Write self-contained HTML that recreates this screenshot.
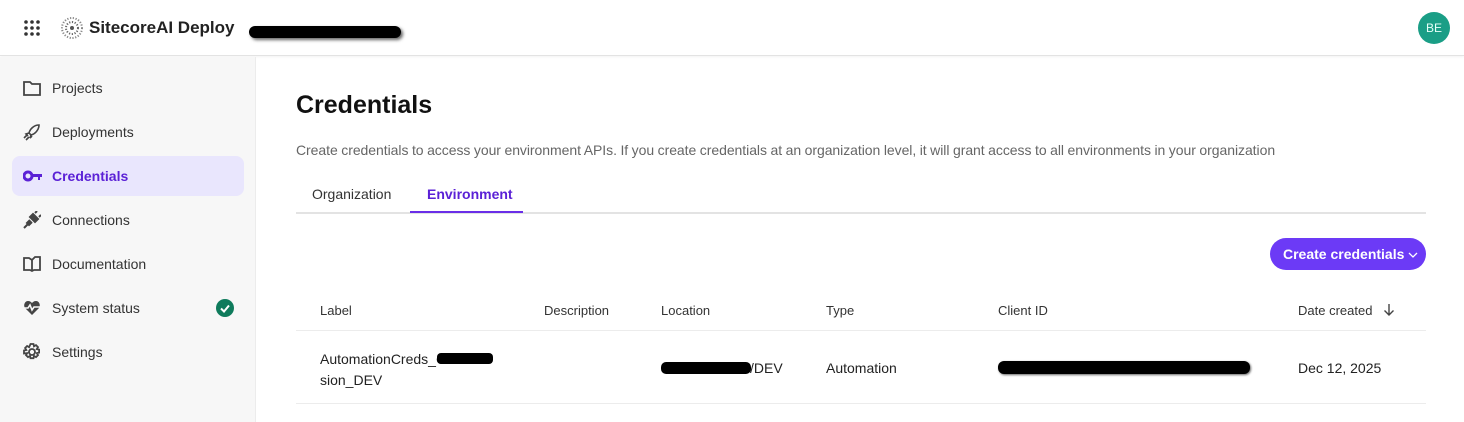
<!DOCTYPE html><html><head><style>
*{margin:0;padding:0;box-sizing:border-box}
body{width:1464px;height:422px;overflow:hidden;background:#fff;font-family:"Liberation Sans",sans-serif;color:#1f1f1f;position:relative}
.hdr{position:absolute;left:0;top:0;width:1464px;height:56px;border-bottom:1px solid #e3e3e3;box-shadow:0 1px 2px rgba(0,0,0,.05);background:#fff}
.side{position:absolute;left:0;top:57px;width:256px;height:365px;background:#f7f7f7;border-right:1px solid #ececec}
.it{position:absolute;left:12px;width:232px;height:40px;border-radius:8px;font-size:14px;color:#333;line-height:40px;padding-left:40px}
.it>svg{position:absolute;left:11px;top:11px}
.it.a{background:#e9e6fd;color:#5b21d6;font-weight:bold}
.t{position:absolute;font-size:13px;color:#333}
</style></head><body>
<div class="hdr">
<svg style="position:absolute;left:24px;top:20px" width="16" height="16"><g fill="#333"><circle cx="2" cy="2" r="1.8"/><circle cx="8" cy="2" r="1.8"/><circle cx="14" cy="2" r="1.8"/><circle cx="2" cy="8" r="1.8"/><circle cx="8" cy="8" r="1.8"/><circle cx="14" cy="8" r="1.8"/><circle cx="2" cy="14" r="1.8"/><circle cx="8" cy="14" r="1.8"/><circle cx="14" cy="14" r="1.8"/></g></svg>
<svg style="position:absolute;left:61px;top:17px" width="22" height="22"><g fill="#555"><circle cx="11" cy="11" r="10" fill="none" stroke="#888" stroke-width="2" stroke-dasharray="1.2 1.6"/><circle cx="11" cy="11" r="6" fill="none" stroke="#666" stroke-width="2" stroke-dasharray="1.2 1.6"/><circle cx="11" cy="11" r="2"/></g></svg>
<div style="position:absolute;left:89px;top:18px;font-size:17px;font-weight:bold;color:#222">SitecoreAI Deploy</div>
<div style="position:absolute;left:249px;top:26px;width:152px;height:12px;background:#000;border-radius:6px;box-shadow:2px 2px 3px #666"></div>
<div style="position:absolute;left:1418px;top:12px;width:32px;height:32px;border-radius:50%;background:#1a9e86;color:#e6fff8;font-size:12px;text-align:center;line-height:32px">BE</div>
</div>
<div class="side">
<div class="it" style="top:11px"><svg width="18" height="18" fill="none" stroke="#444" stroke-width="1.8"><path d="M1 3h6l2 2h8v11H1z"/></svg>Projects</div>
<div class="it" style="top:55px"><svg width="18" height="18" fill="none" stroke="#444" stroke-width="1.6"><path d="M16 2c-5 0-9 4-10 8l2 2c4-1 8-5 8-10zM6 10l-3 1 2 2M8 12l-1 3 2-2M3 17l3-3M1 15l3-3"/></svg>Deployments</div>
<div class="it a" style="top:99px"><svg width="20" height="18"><circle cx="5" cy="9" r="4" fill="none" stroke="#5b21d6" stroke-width="3"/><path d="M9 7h10v3h-2v3h-2v-3H9z" fill="#5b21d6"/></svg>Credentials</div>
<div class="it" style="top:143px"><svg width="18" height="18" fill="#444"><path d="M1 17l4-4M10 3l5 5-3 3-5-5zM12 2l2-2M16 6l2-2M7 9l-3 3 2 2 3-3" stroke="#444" stroke-width="2"/></svg>Connections</div>
<div class="it" style="top:187px"><svg width="18" height="18" fill="none" stroke="#444" stroke-width="1.8"><path d="M1 3h5l3 2 3-3h5v13h-6l-2 1-2-1H1zM9 5v11"/></svg>Documentation</div>
<div class="it" style="top:231px"><svg width="18" height="18"><path d="M9 16L2 9C0 6 2 2 5 2c2 0 3 1 4 2 1-1 2-2 4-2 3 0 5 4 3 7z" fill="#444"/><path d="M0 9h5l2-3 2 5 2-3h7" stroke="#f7f7f7" stroke-width="1.6" fill="none"/></svg>System status
<div style="position:absolute;left:204px;top:11px;width:18px;height:18px;border-radius:50%;background:#0f7b5c"><svg width="18" height="18" style="display:block"><path d="M5 9.5l3 3 5-6" stroke="#fff" stroke-width="2" fill="none"/></svg></div></div>
<div class="it" style="top:275px"><svg width="18" height="18" fill="none" stroke="#444" stroke-width="1.8"><circle cx="9" cy="9" r="3"/><path d="M7.5 1h3l.5 2.3 2-1.2 2 2-1.2 2 2.3.5v3l-2.3.5 1.2 2-2 2-2-1.2-.5 2.3h-3l-.5-2.3-2 1.2-2-2 1.2-2L1 10.5v-3l2.3-.5-1.2-2 2-2 2 1.2z"/></svg>Settings</div>
</div>
<div style="position:absolute;left:296px;top:91px;font-size:25px;font-weight:bold;color:#111">Credentials</div>
<div style="position:absolute;left:296px;top:142px;font-size:14px;color:#666;letter-spacing:-0.05px;word-spacing:-0.3px">Create credentials to access your environment APIs. If you create credentials at an organization level, it will grant access to all environments in your organization</div>
<div style="position:absolute;left:296px;top:212px;width:1130px;height:2px;background:#e3e3e3"></div>
<div class="t" style="left:312px;top:186px;font-size:14px">Organization</div>
<div class="t" style="left:427px;top:186px;font-size:14px;color:#5b21d6;font-weight:bold">Environment</div>
<div style="position:absolute;left:410px;top:211px;width:113px;height:2px;background:#6a2ee8"></div>
<div style="position:absolute;left:1270px;top:238px;width:156px;height:32px;border-radius:16px;background:#6c3af6;color:#fff;font-size:14px;font-weight:bold;line-height:32px;padding-left:13px">Create credentials<svg width="10" height="8" style="position:absolute;left:138px;top:13px"><path d="M1 2l4 4 4-4" stroke="#fff" stroke-width="1.3" fill="none"/></svg></div>
<div class="t" style="left:320px;top:303px">Label</div>
<div class="t" style="left:544px;top:303px">Description</div>
<div class="t" style="left:661px;top:303px">Location</div>
<div class="t" style="left:826px;top:303px">Type</div>
<div class="t" style="left:998px;top:303px">Client ID</div>
<div class="t" style="left:1298px;top:303px">Date created</div>
<svg width="12" height="14" style="position:absolute;left:1383px;top:303px"><path d="M6 1v11M1.5 7.5L6 12l4.5-4.5" stroke="#444" stroke-width="1.4" fill="none"/></svg>
<div style="position:absolute;left:296px;top:330px;width:1130px;height:1px;background:#ececec"></div>
<div style="position:absolute;left:296px;top:403px;width:1130px;height:1px;background:#ececec"></div>
<div class="t" style="left:320px;top:349px;font-size:14px;line-height:21px;color:#222">AutomationCreds_C<br>sion_DEV</div>
<div style="position:absolute;left:437px;top:353px;width:56px;height:11px;background:#000;border-radius:4px"></div>
<div class="t" style="left:750px;top:360px;font-size:14px;color:#222">/DEV</div>
<div style="position:absolute;left:661px;top:362px;width:90px;height:12px;background:#000;border-radius:5px"></div>
<div class="t" style="left:826px;top:360px;font-size:14px;color:#222">Automation</div>
<div style="position:absolute;left:998px;top:361px;width:252px;height:13px;background:#000;border-radius:6px;box-shadow:1px 1px 2px #666"></div>
<div class="t" style="left:1298px;top:360px;font-size:14px;color:#222">Dec 12, 2025</div>
</body></html>
